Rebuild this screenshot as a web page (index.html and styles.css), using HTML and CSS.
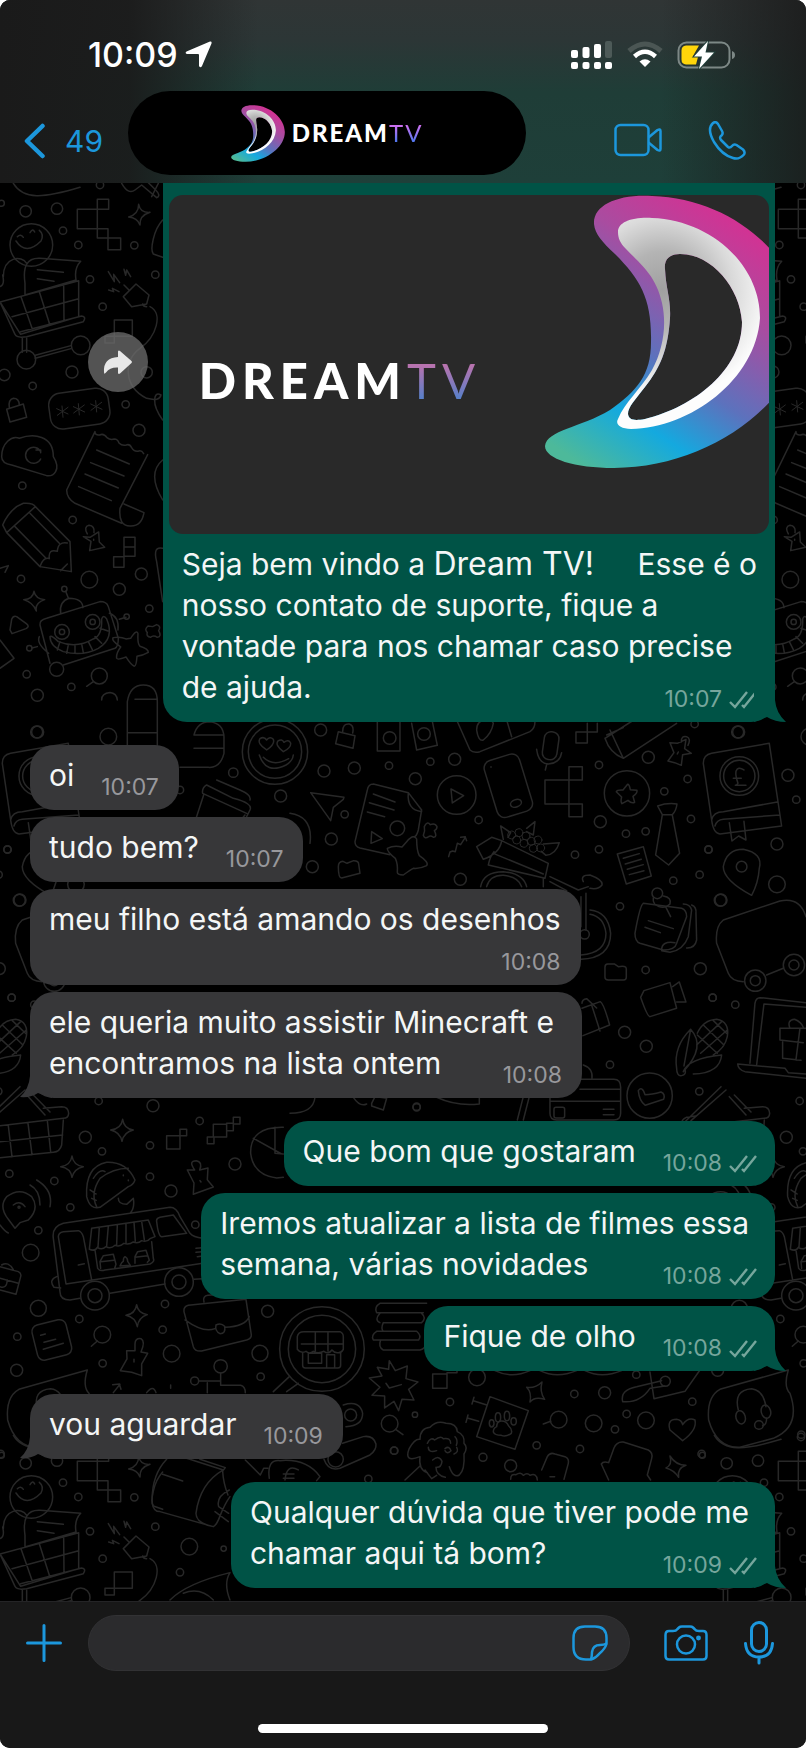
FILE: index.html
```html
<!DOCTYPE html>
<html lang="pt-BR">
<head>
<meta charset="utf-8">
<meta name="viewport" content="width=device-width, initial-scale=1">
<title>Dream TV</title>
<link rel="stylesheet" href="styles.css">
</head>
<body>
<svg class="defs" aria-hidden="true">
  <defs>
    <linearGradient id="rim" gradientUnits="userSpaceOnUse" x1="760" y1="215" x2="590" y2="470">
      <stop offset="0" stop-color="#dc2c90"/>
      <stop offset=".3" stop-color="#a94ca0"/>
      <stop offset=".58" stop-color="#5c72bd"/>
      <stop offset=".78" stop-color="#14a9df"/>
      <stop offset="1" stop-color="#4db99a"/>
    </linearGradient>
    <radialGradient id="silver" gradientUnits="userSpaceOnUse" cx="662" cy="290" r="110">
      <stop offset="0" stop-color="#a0a0a0"/>
      <stop offset=".35" stop-color="#b4b4b4"/>
      <stop offset=".65" stop-color="#dadada"/>
      <stop offset="1" stop-color="#fdfdfd"/>
    </radialGradient>
    <symbol id="mark" viewBox="545 195 258 274">
      <path fill="url(#rim)" fill-rule="evenodd" d="M594 224C593 205 618 194 652 196C735 198 803 262 803 325C803 400 710 468 614 468C575 468 545 459 545 446C547 430 580 428 610 410C637 391 651 375 651 342C652 300 641 280 615 254C602 242 595 234 594 224ZM680 254C668 254 664 261 665 269C666 290 671 299 670 318C668 350 660 368 645 387C635 400 628 407 628 414C629 420 634 421 645 419C694 407 742 370 742 322C740 288 712 254 680 254Z"/>
      <path fill="url(#silver)" fill-rule="evenodd" d="M618 232C618 222 632 217 652 218C710 220 760 264 760 318C756 380 690 428 631 429C620 429 615 424 618 419C625 402 640 390 652 370C663 350 667 325 662 303C656 275 640 264 626 249C620 243 618 238 618 232ZM680 254C668 254 664 261 665 269C666 290 671 299 670 318C668 350 660 368 645 387C635 400 628 407 628 414C629 420 634 421 645 419C694 407 742 370 742 322C740 288 712 254 680 254Z"/>
    </symbol>
    <symbol id="ticks" viewBox="0 0 28 19">
      <path d="M1 12l5 5L18 2M13 15l2 2L27 2" fill="none" stroke="currentColor" stroke-width="2.400"/>
    </symbol>
    <g id="doodles" fill="none" stroke="#282828" stroke-width="4.500" stroke-linejoin="round" stroke-linecap="round">
      <g transform="translate(0 180) scale(.3333)">
        <path d="M40 10C70 60 130 55 240 22M365 10q20 35 40 20l20-15l45 38q15-5-5-25l-20-20"/>
        <circle cx="300" cy="15" r="11"/><circle cx="77" cy="94" r="17"/><circle cx="171" cy="86" r="17"/><circle cx="189" cy="152" r="11"/><circle cx="4" cy="70" r="9"/><circle cx="235" cy="195" r="11"/><circle cx="403" cy="196" r="11"/><circle cx="466" cy="284" r="11"/><circle cx="270" cy="298" r="11"/><circle cx="308" cy="380" r="11"/><circle cx="216" cy="576" r="18"/><circle cx="98" cy="618" r="11"/><circle cx="13" cy="585" r="17"/><circle cx="440" cy="577" r="17"/><circle cx="377" cy="673" r="11"/><circle cx="417" cy="751" r="18"/><circle cx="67" cy="917" r="11"/><circle cx="218" cy="1020" r="11"/><circle cx="268" cy="1199" r="25"/><circle cx="358" cy="1228" r="18"/><circle cx="424" cy="1182" r="18"/><circle cx="63" cy="1197" r="11"/><circle cx="448" cy="1286" r="11"/><circle cx="80" cy="1483" r="11"/><circle cx="298" cy="1488" r="24"/><circle cx="214" cy="1521" r="11"/><circle cx="112" cy="1546" r="18"/><circle cx="170" cy="1468" r="21"/>
        <path d="M232 88h60v58h-60zM292 58h34v30h-34zM292 146h32v28h-32zM324 174h38v35h-38z"/>
        <path d="M416 73q5 26 34 24q-32 10-30 38q-8-22-34-24q30-8 30-38z"/>
        <circle cx="94" cy="195" r="64"/><path d="M48 183q30 45 75 0q10-20-5-32M52 170q10-10 18 2M90 158q8-15 14-2"/>
        <path d="M75 310C68 260 80 233 120 235L242 244Q222 265 228 300L75 345ZM112 269l78 8M112 296l50 8M10 290C10 230 65 225 80 250M0 320q15-5 8-35M0 366L236 302L236 410L62 463ZM0 366L45 463Q50 475 80 470L250 425Q260 410 245 408L62 455M63 350L98 450M118 335L150 436M191 315L192 420M36 410L236 356M67 475v42M80 475v42M106 526L213 497M106 535L213 506"/>
        <circle cx="79" cy="539" r="28"/><circle cx="242" cy="496" r="28"/>
        <path d="M325 275l18 30l-2-22l18 25M372 268l5 18l3-16l12 20M326 330l15 5l-4-10l20 10M370 350L408 312L447 345L440 372L395 380ZM372 315l15 15M440 380q-10 0-12-8M450 380C490 400 470 470 420 505C370 540 370 620 440 655Q480 665 483 645Q465 635 464 660T488 720"/>
        <path d="M343 420h54v49h-54zM315 469h28v20h-28z"/>
        <path d="M20 688l50-16l10 40l-50 14zM28 684q-4-25 12-29q17 0 18 20"/>
        <rect x="148" y="632" width="180" height="108" rx="36" transform="rotate(-8 238 686)"/>
        <path d="M170 686l34 16M204 682l-32 24M186 678l3 34M220 680l34 16M253 675l-32 24M235 671l3 34M272 672l34 16M305 667l-32 24M287 662l3 34" stroke-width="3"/>
        <path d="M5 830C5 790 35 765 58 775C100 760 160 765 160 830C185 870 160 890 140 887L35 855Q5 850 5 830ZM122 815a24 24 0 1 0 0 22M108 810h14v8"/>
        <path d="M285 755L200 930Q200 955 225 970L365 1030M443 824L360 985Q355 1038 390 1038Q425 1040 432 998L372 972M285 755q0 12 14 10q12-6 22 8q10 8 22 4q10 0 14 12q10 10 22 6q10-4 16 8q8 14 22 10q8-2 14 8M290 810l98 42M272 848l100 40M255 882l100 42M236 920l98 42"/>
        <path d="M8 1035Q30 985 70 970Q100 968 106 980L210 1085L214 1175L120 1160L20 1058ZM20 1058L106 980M45 1040L138 1135M90 1000L178 1090M120 1160q10-30 28-24q-4-30 24-22q2-30 30-25M182 1172l20-20M0 1165l25-8l-10 20"/>
        <path d="M250 1070l20 2l26-16l2 30l16 16l-45 10l4-28zM262 1062q-12-22 5-26q18 2 15 22M281 1078v3M372 1072h33v57h-33zM372 1101h33M341 1130h31v32h-31zM488 1105q-30-8-18 40l18 120"/>
        <path d="M102 1234q4 22 32 25q-30 10-25 34q-10-26-38-34q28-2 31-25zM30 1350l5-32q5-12 15-8l30 22q10 8-2 14l-42 15zM0 1380l42 55L0 1465"/>
        <path d="M120 1335Q118 1320 140 1315L300 1265Q320 1265 325 1280L355 1375Q355 1400 345 1405L190 1455M150 1450L120 1335M182 1300q-5-35 25-45q40 0 42 28M205 1254l-8-20M328 1300q30 10 26 50M358 1318l20-6M118 1370q-10 20 28 50M112 1400l-16 4M150 1370q0 30 40 45q60 15 105-10q50-30 25-88q-10-15-15 0q2 50-25 60q-50 30-105 8q-20-20-25-15zM180 1385l-8 25M205 1395l-5 25M225 1395v25M245 1392l5 26M265 1385l12 24M285 1370l20 20M300 1345l24 8"/>
        <circle cx="186" cy="1356" r="22"/><circle cx="186" cy="1356" r="8"/><circle cx="278" cy="1326" r="22"/><circle cx="278" cy="1326" r="8"/><circle cx="193" cy="1227" r="8"/><circle cx="380" cy="1310" r="8"/><circle cx="88" cy="1405" r="8"/>
        <path d="M392 1375q18-28 22-14q-2 30 6 38q25 8 25 18q-18 10-34 12q-2 30-8 30q-10-4-25-28q-25 10-28 4q-2-15 12-34q-30-20-22-28q22-4 38 4zM458 1340l12-6q14 4 6 18q10 18-4 20q-12-8-20 0q-14-2-10-14q-10-10 2-20zM280 1505l-20 14M305 1560q0-20 25-22q20 2 22 22M475 10l-20 40"/>
        <path d="M488 120C460 150 450 210 460 222L488 232M488 840Q440 880 488 960"/>
      </g>
      <g transform="translate(0 720) scale(.3333)">
        <path d="M382 78V-55Q390 -105 430 -105Q472 -105 472 -55V78M405 -62h64M384 38h88M582 45Q592 5 630 5Q670 10 672 50V100Q660 145 625 142H540M582 45h90M582 85h90M620 195L700 235Q760 250 750 270L740 290M620 195Q605 205 608 220L740 280M650 180l70 30Q755 225 750 240M612 222L580 320M735 285L715 310"/>
        <circle cx="825" cy="95" r="98"/><circle cx="825" cy="95" r="80"/><path d="M800 90q-30-20-20-34q12-8 20 4q10-12 20-2q6 14-20 32zM850 95q-26-20-16-32q12-8 18 4q14-10 20 2q2 14-22 26zM778 105q20 60 80 30q20-12 22-30M790 112q30 30 76 4"/>
        <circle cx="110" cy="36" r="18"/><circle cx="325" cy="50" r="25"/><circle cx="540" cy="210" r="11"/><circle cx="700" cy="158" r="14"/><circle cx="842" cy="228" r="18"/><circle cx="22" cy="388" r="11"/><circle cx="60" cy="540" r="18"/><circle cx="35" cy="833" r="11"/>
      </g>
      <g transform="translate(290 720) scale(.3333)">
        <circle cx="92" cy="30" r="18"/><circle cx="102" cy="153" r="18"/><circle cx="193" cy="144" r="18"/><circle cx="297" cy="137" r="11"/><circle cx="421" cy="125" r="11"/><circle cx="494" cy="118" r="18"/><circle cx="376" cy="176" r="18"/><circle cx="164" cy="283" r="11"/><circle cx="124" cy="357" r="18"/><circle cx="67" cy="440" r="18"/><circle cx="566" cy="300" r="11"/><circle cx="511" cy="478" r="18"/><circle cx="927" cy="135" r="11"/><circle cx="1075" cy="112" r="18"/><circle cx="1193" cy="177" r="11"/><circle cx="1123" cy="214" r="11"/><circle cx="1203" cy="297" r="11"/><circle cx="931" cy="305" r="18"/><circle cx="1008" cy="341" r="11"/><circle cx="1067" cy="334" r="11"/><circle cx="927" cy="388" r="11"/><circle cx="855" cy="404" r="11"/><circle cx="1256" cy="389" r="11"/><circle cx="1229" cy="464" r="11"/><circle cx="1150" cy="482" r="11"/><circle cx="990" cy="559" r="11"/><circle cx="1291" cy="541" r="18"/><circle cx="1346" cy="36" r="18"/><circle cx="1494" cy="166" r="18"/><circle cx="1519" cy="239" r="11"/><circle cx="1461" cy="372" r="18"/><circle cx="1461" cy="493" r="25"/><circle cx="1067" cy="750" r="11"/><circle cx="1231" cy="746" r="18"/><circle cx="1268" cy="833" r="11"/><circle cx="1336" cy="854" r="11"/><circle cx="1004" cy="937" r="18"/><circle cx="1069" cy="979" r="18"/><circle cx="960" cy="1034" r="11"/><circle cx="1228" cy="1114" r="11"/><circle cx="380" cy="1162" r="11"/><circle cx="1214" cy="12" r="11"/>
        <path d="M145 35l50 12l-6 38l-52-14zM158 35q0-25 20-23q15 5 10 27M262 0v93h68V0M365 10l15 80l62-14l-15-72M500 0L540 90Q550 100 570 95L720 35Q735 25 735 5M560 30q0-30 30-30q18 0 20 10q-5 30-30 50q-15 5-20-30M650 0l15 50M0 280Q70 290 60 370"/>
        <circle cx="299" cy="54" r="19"/><circle cx="402" cy="42" r="19"/>
        <path d="M62 218L162 232L160 238L130 262L122 302Z"/>
        <path d="M250 192Q235 192 232 210L195 365Q195 380 210 384L300 404M250 192L355 218L395 270L385 330Q380 350 372 350M355 218Q350 270 395 275M250 222l65 24M238 248l74 22M232 276l52 14M245 335l-2 35l34-14z"/><circle cx="322" cy="325" r="22"/>
        <path d="M350 365q22-25 30-8q0 35 8 50q30 20 22 30q-20 10-40 8q-10 5-30 20q-18 0-18-8q2-25-6-42q-25-20-24-30q20-10 44-4zM403 320q8-18 18-6q14-6 20 6q0 8-8 12q10 18-2 20q-10-6-15-2q-12 8-16-4q6-12 3-26z"/>
        <circle cx="500" cy="225" r="58"/><path d="M483 207l38 20l-34 22z"/>
        <path d="M145 440q0-15 14-16l12 6l20-8q15 0 15 10l4 28l-55 14q-10 0-10-34zM476 410l4-14l8-3l8 2l6-25l10 4l14-22l4 10M512 352l14-2"/>
        <rect x="600" y="108" width="110" height="178" rx="24" transform="rotate(-17 656 197)"/><ellipse cx="678" cy="250" rx="17" ry="11" transform="rotate(-20 678 250)"/><path d="M603 140v2"/>
        <rect x="760" y="35" width="44" height="84" rx="20" transform="rotate(8 782 77)"/><path d="M740 88Q745 130 775 132Q810 130 815 98M770 134l-4 16M858 36h34v33h-34zM892 36V10M892 36h30V10"/>
        <path d="M765 180h72v72h-72zM837 140h40v40h-40zM837 252h40v38h-40z"/>
        <path d="M945 55L1055 -15M945 55Q960 100 1000 115L1160 10M960 30L1000 115M950 45l50-22"/>
        <path d="M1140 68l22 2l26-12l-4 28l20 14l-26 4l-4 32l-20-8l-20-5l18-25zM1174 66q0-20 16-16q14 6 4 26M1165 96l-3 6"/>
        <circle cx="1011" cy="220" r="68"/><path d="M1013 193q5 0 8 16l20 2q2 8-12 18l5 18q-8 5-20-6l-18 10q-5-5-1-20l-16-16q2-6 20-5z"/>
        <path d="M1103 258q28-10 58-6q-2 20-14 32h-30zM1117 285L1097 405L1136 435L1169 400L1147 285M982 402l78-22l24 88l-75 24zM1000 415l48-14M1006 432l48-14M1012 448l48-14M1018 464l44-12"/>
        <path d="M1240 130Q1240 105 1265 100L1438 70L1475 318L1290 342Q1270 340 1265 300ZM1265 300Q1270 275 1300 275L1462 246M1275 318Q1280 300 1300 298L1470 285M1318 308l8 55l20-15l22 12l-6-56"/><circle cx="1348" cy="168" r="58"/><circle cx="1348" cy="168" r="47"/><path d="M1362 150q-18-12-24 4q-2 12 6 36q-4 6-8 6h32M1330 175h24"/>
        <path d="M1385 526Q1300 480 1300 440Q1310 388 1360 388Q1420 400 1408 445Q1405 490 1385 526Z"/><circle cx="1355" cy="440" r="16"/>
        <path d="M572 500Q580 455 640 455Q700 460 710 500M590 500Q600 465 640 466Q685 470 695 500M560 380L605 352L635 362Q630 400 580 418ZM635 362L775 430L765 475L595 435Q600 410 612 395M610 400L760 462M760 475V500M780 470L865 510L895 500M780 485L830 512M880 485Q870 465 900 465Q940 480 936 495Q925 510 900 505M888 520V630M873 530V620M632 318l30 20l-8 14M632 318l8 40M735 305l-5 40l-20-10M735 305l-25 20M760 372l48-4q-10 35-40 38l-14-12"/>
        <g stroke-width="3"><circle cx="665" cy="345" r="12"/><circle cx="687" cy="338" r="12"/><circle cx="708" cy="348" r="12"/><circle cx="680" cy="360" r="12"/><circle cx="702" cy="370" r="12"/><circle cx="724" cy="364" r="12"/><circle cx="744" cy="360" r="12"/><circle cx="730" cy="385" r="12"/><circle cx="752" cy="384" r="12"/></g>
        <path d="M873 718Q962 715 962 640Q955 575 900 570M873 705Q948 700 948 640Q942 590 900 583"/><circle cx="884" cy="643" r="14"/>
        <path d="M1060 550Q1050 555 1035 640Q1035 665 1050 670L1120 690Q1155 690 1160 670L1190 590Q1190 570 1175 565L1060 550M1180 552Q1200 552 1205 570L1195 650Q1180 690 1140 697L1115 692M1205 555Q1220 560 1218 580L1220 660Q1215 685 1190 684M1075 602l75 24M1065 622l46 16M1115 690q0-28 40-22"/><circle cx="1102" cy="520" r="16"/><path d="M1090 534q-2 10 4 18q26 20 46 0q6-20-20-24M1128 562l14 28"/>
        <path d="M1300 600L1470 543Q1530 530 1548 590M1300 600Q1275 620 1280 670L1315 760Q1325 785 1360 785M1430 765L1480 745"/><circle cx="1396" cy="782" r="32"/><circle cx="1396" cy="782" r="15"/><circle cx="1512" cy="735" r="32"/><circle cx="1512" cy="735" r="15"/>
        <path d="M945 742q0-10 8-10h20l12 8q24-4 24 6v26q0 8-8 8h-46q-10 0-10-8z"/>
        <path d="M1062 812L1140 788L1160 865L1080 890Q1072 890 1052 832ZM1148 800l20-14l20 60l-28 0"/>
        <path d="M876 850q0-12 14-14l30 28M876 865l55-20q10 5 28 70l-80 32M905 855l25 78"/>
        <path d="M1160 1045Q1150 980 1202 928Q1250 980 1180 1055M1180 1055Q1195 1015 1295 1005Q1290 1060 1210 1062M1160 1045q0 24 15 22q15-2 10-20M1202 928l-20 110M1222 940Q1240 900 1280 898Q1320 905 1312 950Q1305 985 1270 1005M1222 945l60 55M1240 915l62 60M1270 902l42 40M1295 905l-75 70M1312 930l-80 70"/>
        <path d="M1548 848L1410 833Q1398 833 1395 850L1380 1030M1548 862L1422 852L1400 1035M1548 1075L1365 1055Q1345 1050 1343 1032L1485 1045L1495 1058L1548 1062M1470 925h78M1470 925v35l70 8M1478 965v50l55 6M1530 925l-12 95M1500 925q-10-25 14-27q20 8 26 24"/>
        <circle cx="1079" cy="1127" r="68"/><path d="M1045 1112q12-15 20 12q20 0 48-8q14 6 8 22l-55 18q-18-12-21-44z"/>
        <path d="M860 1078h112q20 0 20 24v78q0 20-20 20H800q-20 0-20-20V1130M870 1108h122M780 1144h212M940 1168h32M940 1184h32"/><rect x="792" y="1162" width="32" height="32" rx="6"/>
        <path d="M880 1035q30 10 26 42M700 1130L682 1200M718 1130L700 1200"/>
        <path d="M0 1180Q70 1180 75 1132M190 1132q20 30 40 20M245 1150l10-20l35 5l-10 35l-35-12zM440 1132Q500 1160 568 1152V1132"/>
      </g>
      <g transform="translate(0 1090) scale(.3333)">
        <circle cx="459" cy="47" r="18"/><circle cx="296" cy="33" r="11"/><circle cx="256" cy="142" r="18"/><circle cx="306" cy="184" r="11"/><circle cx="450" cy="166" r="11"/><circle cx="599" cy="93" r="11"/><circle cx="163" cy="273" r="11"/><circle cx="28" cy="251" r="11"/><circle cx="450" cy="260" r="11"/><circle cx="513" cy="303" r="18"/><circle cx="705" cy="222" r="18"/><circle cx="211" cy="352" r="11"/><circle cx="115" cy="421" r="11"/><circle cx="586" cy="404" r="11"/><circle cx="92" cy="488" r="25"/><circle cx="115" cy="655" r="24"/><circle cx="238" cy="687" r="11"/><circle cx="495" cy="642" r="11"/><circle cx="488" cy="719" r="11"/><circle cx="52" cy="740" r="11"/><circle cx="50" cy="841" r="18"/><circle cx="308" cy="820" r="11"/><circle cx="515" cy="791" r="25"/><circle cx="803" cy="664" r="18"/><circle cx="780" cy="790" r="24"/><circle cx="782" cy="860" r="11"/><circle cx="1245" cy="974" r="8"/><circle cx="1182" cy="1082" r="11"/><circle cx="1350" cy="936" r="11"/><circle cx="568" cy="1370" r="25"/><circle cx="540" cy="1447" r="11"/><circle cx="671" cy="1376" r="8"/><circle cx="1250" cy="50" r="11"/>
        <path d="M-48 95L60 -10M-30 92L75 0M85 20L135 75M100 15L150 66M130 55L185 50Q205 50 206 70Q205 85 190 85L-40 112M190 90L185 165Q180 185 160 187L-10 204L-36 112M25 108L36 200M84 100L96 194M142 92L152 186M-28 158L188 135M-48 108q-20-14 4-26l28-4"/>
        <path d="M368 88q4 28 32 32q-28 6-34 34q-6-28-34-34q32-4 36-32zM216 198q4 28 34 32q-28 6-34 32q-4-28-34-32q30-4 34-32zM410 644q4 26 32 30q-26 8-30 36q-6-28-34-34q28-4 32-32z"/>
        <path d="M500 137h40v40h-40zM540 118h20v19h-20zM640 103h40v38h-40zM622 141h20v20h-20zM680 100h20v22h-20zM700 82h20v20h-20zM850 112Q750 110 752 190Q760 255 830 264L850 262M760 145L845 192M825 112V190L850 192"/>
        <path d="M260 320Q255 230 320 217Q380 215 405 270Q400 285 385 290L300 352Q270 360 260 320ZM290 350Q270 310 300 265Q340 235 385 235M280 265q20-30 35-20M370 255v2M385 270v2M270 300l18 12M275 325l14 6"/>
        <path d="M562 240l22 0q-20-28 5-28q20 4 10 28l25-6l-2 35l18 22l-60 22l2-34zM600 272l3 4"/>
        <path d="M45 415L25 388Q-5 350 20 320Q60 290 95 320Q120 355 85 390L60 398ZM40 345q20-15 35 5M90 285q30 15 30 60M110 270q50 30 40 80M0 405q15 20 25 24"/><circle cx="57" cy="352" r="3"/>
        <path d="M180 605L160 445Q155 410 190 400L510 352Q530 352 540 380L570 430Q580 442 608 445M175 440Q175 428 190 425L235 422Q245 425 250 440L275 570M175 440L198 582L608 520M180 605Q180 630 210 630L240 625M330 610L495 582M582 568L608 566M170 560q-25 10-8 32l20 2M235 525l18-4M470 395Q468 385 480 382L520 375L560 430L485 440Q475 440 470 395ZM355 325q0 18 25 18l20-18q5 30-10 45M588 475l20-2M588 487l20-2M592 500l16-2"/>
        <path d="M275 415L445 390L465 440M275 415L268 478Q285 485 292 472Q305 482 318 470Q332 478 345 466Q360 472 372 460Q386 466 400 456Q414 462 425 452Q440 458 450 446L465 440M298 412l-4 60M325 408l-5 60M352 404l-2 60M378 400l0 60M402 396l4 58M425 394l8 55M285 480l8 55Q300 545 315 540L450 522Q465 515 460 505L455 455M302 535l-2-20l10-18l30-4l8 30l-4 12M302 515l40-4M360 528q5-12 10-14q0-12 5-14q8 4 8 14l8 12zM405 520l0-20l8-15l25-4l10 30l-6 6M405 502l38-5"/>
        <circle cx="285" cy="617" r="43"/><circle cx="285" cy="617" r="21"/><circle cx="537" cy="576" r="43"/><circle cx="537" cy="576" r="21"/>
        <path d="M0 530L55 545Q65 550 62 560L48 613L0 600M5 525q20-12 35 14M0 565l55 15M0 590q20 8 22-20"/>
        <rect x="103" y="696" width="105" height="108" rx="20" transform="rotate(-14 155 750)"/><path d="M122 736l14-4M132 757l35-9M130 778l60-18"/>
        <circle cx="307" cy="734" r="25"/><path d="M292 753l-18 16M380 782l25 0l0-20q0-18 18-16q14 8 0 40l20 4l-18 32l0 35l-30-10l-34-5l20-35zM402 808v8"/>
        <path d="M552 665Q550 650 565 646L738 628M552 665L580 770Q585 785 605 783L740 750Q755 745 754 735L738 628M555 690Q610 730 645 716M675 712Q735 710 748 680M612 636q-5-18 12-20l22-2M648 705q15-8 26 4q4 22-14 22q-16-8-12-26z"/>
        <circle cx="966" cy="777" r="127"/><circle cx="966" cy="777" r="101"/><path d="M868 860L820 905M895 880L860 905M912 725h108q10 4 10 15v38q-6 12-18 10q-10 0-16-8q-10 14-24 4q-18 8-32 0q-12 10-22 0q-16 8-26-6v-38q2-15 20-15zM904 762h124M946 725v58M984 725v58M908 788v38q0 8 8 8h98q8 0 8-8v-38M925 790h40v30h-40zM980 834v-40h24v38"/>
        <circle cx="662" cy="829" r="20"/><circle cx="584" cy="873" r="12"/><path d="M662 850v36M597 873h65M622 908v-30M662 886h60q14 4 14 22M440 908q20-25 28 0M512 885v10M340 908l20-25M338 884l20-2l5 16"/>
        <path d="M1140 640h140M1140 640q-18 10-10 28h140M1150 698h115q16-14 0-28M1140 670q-18 20 0 28M1150 698q-8 18 0 26M1130 724h120q16 14 6 26H1120q-8-14 10-26M1142 750q-8 22 8 30h110q14-4 18-16"/>
        <path d="M1168 812l18 30l36-14l-4 38l36 10l-28 22l16 32l-36-2l-10 34l-14-28l-28 20l0-36l-38-2l24-24l-32-28l38-6l-14-26l34 6zM1158 880l10 14l36-10"/>
        <circle cx="1052" cy="975" r="18"/><path d="M1030 945q50-15 58 25q0 38-50 40M1028 1060L1090 1040Q1120 1035 1128 1062Q1130 1080 1110 1095L1020 1135Q985 1145 972 1108"/><circle cx="1007" cy="1108" r="23"/><circle cx="1169" cy="1001" r="25"/><path d="M1187 1018l22 16"/>
        <path d="M500 1108C460 1150 455 1200 457 1240Q460 1265 480 1265L640 1310C660 1300 655 1270 690 1220M560 1105L670 1140Q600 1180 588 1270Q588 1300 640 1310M488 1153l60 20M600 1108l76 25l-8 10Q670 1180 684 1215M736 1110l45 45l10-20l12 0M808 1165Q800 1108 840 1112Q920 1105 960 1160L950 1172M895 1140q-35-20-40 30M850 1152h32M850 1165h32M688 1200q-40 20-32 50l30 20M645 1265l40 30"/>
        <path d="M510 1530Q560 1480 690 1448Q670 1480 690 1530M550 1510q50-20 90 20"/>
      </g>
      <g transform="translate(340 1360) scale(.3333)">
        <circle cx="411" cy="52" r="25"/><circle cx="703" cy="102" r="11"/><circle cx="794" cy="98" r="18"/><circle cx="889" cy="44" r="11"/><circle cx="1057" cy="125" r="11"/><circle cx="860" cy="162" r="11"/><circle cx="918" cy="181" r="25"/><circle cx="656" cy="179" r="25"/><circle cx="761" cy="190" r="25"/><circle cx="825" cy="208" r="11"/><circle cx="590" cy="256" r="11"/><circle cx="720" cy="267" r="11"/><circle cx="429" cy="292" r="12"/><circle cx="512" cy="317" r="18"/><circle cx="163" cy="272" r="11"/><circle cx="1085" cy="282" r="11"/><circle cx="1384" cy="224" r="11"/><circle cx="976" cy="64" r="15"/><circle cx="85" cy="357" r="11"/>
        <path d="M278 42h43v43h-43zM321 38h30V30M465 32q50 25 105 0M600 32q50 25 110 0M735 32q50 25 110 0M610 192l22-8"/>
        <path d="M606 66q-8 30 8 52q-30-10-44 8q6-28-10-44q26 4 46-16zM990 288q18 28 48 28q-28 10-22 36q-14-22-38-28q20-10 12-36z"/>
        <path d="M450 110L565 152L525 268L410 230ZM402 112l-6 20M400 122l38 12M384 165l-6 22M382 174l34 10M478 184q20-4 28 14q12 10 8 22q-16 12-30 6q-20 0-24-10q0-12 10-16q0-12 8-16z"/><ellipse cx="474" cy="172" rx="8" ry="14"/><ellipse cx="501" cy="168" rx="8" ry="14"/><ellipse cx="455" cy="190" rx="7" ry="11"/><ellipse cx="521" cy="184" rx="8" ry="11"/>
        <path d="M240 290Q190 310 208 265Q225 235 240 238Q240 205 270 202Q290 180 318 190Q350 190 352 215Q375 225 372 250Q385 262 372 282Q375 330 358 345Q340 355 328 320M240 290Q235 330 262 338M262 250q10-20 22-10q18-14 26-4q22-4 22 14M265 262q0 18 25 10M315 266q12-10 18 6q-12 12-18 0M350 262q8 14-8 20M278 300q20-16 28 4q-2 18-15 18M288 322q0 24 28 30M240 318L195 360M255 330l20 26l15-10M345 230q10 10 4 26"/>
        <path d="M605 330L622 290Q630 276 645 282L675 290Q688 296 685 310L672 358M630 350h14M512 358q0-18 16-14q14-10 22 2q12-10 20 0q20-8 22 14"/>
        <path d="M806 360L784 312Q790 302 806 308L822 264Q830 244 850 246L925 270Q940 278 935 296L922 345L932 360"/>
        <path d="M930 36L942 116L1035 94L1080 30M848 125Q840 90 890 80L965 62M848 125Q900 130 930 85L975 78"/>
        <path d="M1028 242L990 210Q980 178 1010 178Q1025 180 1028 194Q1045 170 1065 180Q1072 210 1028 242Z"/>
        <path d="M1345 30Q1330 80 1350 100Q1385 200 1300 235L1200 262Q1130 265 1106 180Q1100 110 1140 88L1345 30M1195 150Q1180 90 1235 86Q1270 90 1278 140"/><ellipse cx="1202" cy="172" rx="14" ry="20" transform="rotate(-15 1202 172)"/><ellipse cx="1278" cy="155" rx="14" ry="20" transform="rotate(-15 1278 155)"/><path d="M1280 175q0 20-12 22"/><circle cx="1257" cy="195" r="13"/>
      </g>
    </g>
  </defs>
</svg>

<div class="app">
  <header class="top">
    <div class="status">
      <div class="status-left">
        <time class="clock">10:09</time>
        <svg width="27" height="27" viewBox="0 0 27 27"><path d="M25 0.5Q27 0 26.500 2.500L17 25Q15.500 27.500 14 25V14Q14 13 13 13H2Q-.5 12 1.500 10.500Z" fill="#fff"/></svg>
      </div>
      <div class="status-right">
        <svg width="42" height="28" viewBox="0 0 42 28" fill="#fff"><rect y="9" width="7" height="8" rx="2"/><rect x="11.500" y="6" width="7" height="11" rx="2"/><rect x="23" y="3" width="7" height="14" rx="2"/><rect x="34" width="7" height="17" rx="2" fill="#4d5a58"/><rect y="21" width="7" height="7" rx="2"/><rect x="11.500" y="21" width="7" height="7" rx="2"/><rect x="23" y="21" width="7" height="7" rx="2"/><rect x="34" y="21" width="7" height="7" rx="2"/></svg>
        <svg width="36" height="27" viewBox="0 0 36 27" fill="none"><path d="M2 10Q18-4 34 10" stroke="#4b5654" stroke-width="5"/><path d="M7.500 15.500Q18 6 28.500 15.500" stroke="#fff" stroke-width="4.500"/><path d="M12.500 20.500Q18 16 23.500 20.500L18 26Z" fill="#fff"/></svg>
        <svg width="59" height="28" viewBox="0 0 59 28"><rect x="1.500" y="1.500" width="51" height="25" rx="8" fill="none" stroke="#7d8886" stroke-width="2"/><path d="M55 10q3 1 3 4t-3 4z" fill="#7d8886"/><path d="M9 4.500H22L16 15L21 16L19 23.500H9Q4.500 23 4.500 18.500V9.500Q4.500 5 9 4.500Z" fill="#ffd50a"/><path d="M31 0L17 15.500H25L22 28L37 11.500H28.500Z" fill="#fff" stroke="#22403b" stroke-width="2" paint-order="stroke"/></svg>
      </div>
    </div>
    <nav class="bar">
      <a class="back" href="#chats" aria-label="Voltar, 49 conversas">
        <svg width="22" height="36" viewBox="0 0 22 36"><path d="M18.500 3L3 18L18.500 33" fill="none" stroke="currentColor" stroke-width="4.500" stroke-linecap="round" stroke-linejoin="round"/></svg>
        <span>49</span>
      </a>
      <div class="pill">
        <svg class="mark-small"><use href="#mark"/></svg>
        <span class="word word-small">DREAM<span class="word-tv tv-small">TV</span></span>
      </div>
      <div class="calls">
        <button type="button" aria-label="Chamada de vídeo"><svg width="48" height="34" viewBox="0 0 48 34" fill="none" stroke="currentColor" stroke-width="2.500" stroke-linejoin="round"><rect x="1.500" y="2" width="33" height="30" rx="5"/><path d="M34.500 14.500L43.500 7Q46.500 5.500 46.500 8V26Q46.500 28.500 43.500 27L34.500 19.500"/></svg></button>
        <button type="button" aria-label="Chamada de voz"><svg width="38" height="39" viewBox="0 0 38 39" fill="none" stroke="currentColor" stroke-width="2.500" stroke-linejoin="round"><path d="M5 2Q8 0 10 3L14 10Q15.500 12.500 13.500 14.500Q11 16 13 19L20 26Q22 27.500 24 25Q26 22.500 28.500 24L35 28.500Q37.500 31 36 33.500Q31 39 25 37Q14 34 6 21Q-1.500 8 5 2Z"/></svg></button>
      </div>
    </nav>
  </header>

  <main class="chat">
    <svg class="wallpaper" aria-hidden="true"><g transform="translate(0 -183)"><use href="#doodles"/><use href="#doodles" x="701"/><use href="#doodles" x="-701"/><use href="#doodles" y="1252"/><use href="#doodles" x="701" y="1252"/></g></svg>

    <div class="group out media-group">
      <button class="share" type="button" aria-label="Encaminhar"><svg width="30" height="25" viewBox="0 0 30 25"><path d="M15 1.500V7Q0 8 1 22Q1 25 3 22.500Q7 17 15 17.500V23Q15.500 24.500 17 23.500L28.500 13Q29.500 12 28.500 11L17 1Q15.500 0 15 1.500Z" fill="#e8e8e8"/></svg></button>
      <article class="bubble media tail">
        <div class="picture">
          <span class="word word-big">DREAM<span class="word-tv">TV</span></span>
          <svg class="mark-big"><use href="#mark"/></svg>
        </div>
        <div class="caption stack">
          <p>Seja bem vindo a <span class="brand">Dream TV!</span> Esse é o<br>nosso contato de suporte, fique a<br>vontade para nos chamar caso precise<br>de ajuda.</p>
          <span class="meta"><time>10:07</time><svg class="ticks"><use href="#ticks"/></svg></span>
        </div>
      </article>
    </div>

    <div class="group in">
      <article class="bubble"><p>oi</p><span class="meta"><time>10:07</time></span></article>
      <article class="bubble"><p>tudo bem?</p><span class="meta"><time>10:07</time></span></article>
      <article class="bubble below"><p>meu filho está amando os desenhos</p><span class="meta"><time>10:08</time></span></article>
      <article class="bubble stack tail"><p>ele queria muito assistir Minecraft e<br>encontramos na lista ontem</p><span class="meta"><time>10:08</time></span></article>
    </div>

    <div class="group out">
      <article class="bubble"><p>Que bom que gostaram</p><span class="meta"><time>10:08</time><svg class="ticks"><use href="#ticks"/></svg></span></article>
      <article class="bubble stack"><p>Iremos atualizar a lista de filmes essa<br>semana, várias novidades</p><span class="meta"><time>10:08</time><svg class="ticks"><use href="#ticks"/></svg></span></article>
      <article class="bubble tail"><p>Fique de olho</p><span class="meta"><time>10:08</time><svg class="ticks"><use href="#ticks"/></svg></span></article>
    </div>

    <div class="group in">
      <article class="bubble tail"><p>vou aguardar</p><span class="meta"><time>10:09</time></span></article>
    </div>

    <div class="group out">
      <article class="bubble stack tail"><p>Qualquer dúvida que tiver pode me<br>chamar aqui tá bom?</p><span class="meta"><time>10:09</time><svg class="ticks"><use href="#ticks"/></svg></span></article>
    </div>
  </main>

  <footer class="bottom">
    <form class="composer">
      <button type="button" aria-label="Anexar"><svg width="36" height="38" viewBox="0 0 36 38"><path d="M18 1.500V36.500M1.500 19H34.500" stroke="currentColor" stroke-width="3" stroke-linecap="round"/></svg></button>
      <div class="field">
        <input type="text" aria-label="Mensagem">
        <button type="button" aria-label="Figurinhas"><svg width="36" height="36" viewBox="0 0 36 36" fill="none" stroke="currentColor" stroke-width="2.500" stroke-linejoin="round"><path d="M19 34.500H14Q1.500 34.500 1.500 22V13Q1.500 1.500 13 1.500H23Q34.500 1.500 34.500 13V19Q33 24 27.500 28.500Q24 33 19 34.500Z"/><path d="M19 34.500Q20 31 20 27Q21 20 28 20Q32 20 34.500 18.500"/></svg></button>
      </div>
      <div class="tools">
        <button type="button" aria-label="Câmera"><svg width="44" height="36" viewBox="0 0 44 36" fill="none" stroke="currentColor" stroke-width="2.500" stroke-linejoin="round"><path d="M1.500 10Q1.500 6 5 6H9Q12 6 13.500 4L15 2.500Q16 1.500 18 1.500H26Q28 1.500 29 2.500L30.500 4Q32 6 35 6H39Q42.500 6 42.500 10V31Q42.500 34.500 39 34.500H5Q1.500 34.500 1.500 31Z"/><circle cx="22" cy="19.500" r="9"/><circle cx="34.500" cy="13" r="1.200" fill="currentColor"/></svg></button>
        <button type="button" aria-label="Gravar áudio"><svg width="30" height="44" viewBox="0 0 30 44" fill="none" stroke="currentColor" stroke-width="3" stroke-linecap="round"><rect x="7.500" y="1.500" width="15" height="29" rx="7.500"/><path d="M1.500 22.500Q2.500 36 15 36Q27.500 36 28.500 22.500M15 36V42"/></svg></button>
      </div>
    </form>
    <div class="home"></div>
  </footer>
</div>
</body>
</html>
```
FILE: styles.css
```css
* { box-sizing: border-box; }

body {
  margin: 0;
  background: #fff;
  font-family: Inter, Roboto, sans-serif;
  color: #f4f6f6;
}

p { margin: 0; }

button {
  display: flex;
  align-items: center;
  justify-content: center;
  padding: 0;
  border: 0;
  background: none;
  color: #1c97dc;
}

.defs { position: absolute; width: 0; height: 0; }

.app {
  display: flex;
  flex-direction: column;
  min-height: 100vh;
  overflow: hidden;
  border-radius: 10px;
  background: #000;
}

/* header */
.top {
  display: flex;
  flex-direction: column;
  background:
    linear-gradient(to right, #1a1a1a 0, #1a1a1ae6 16%, #1a1a1a00 32%, #1a1a1a00 82%, #1a1a1ad0 100%),
    linear-gradient(to bottom, #303535 0, #2c3636 22%, #1f3d37 50%, #1e3f39 100%);
}

.status {
  display: flex;
  justify-content: space-between;
  align-items: center;
  height: 91px;
  padding: 18px 70px 0 88px;
}

.status-left { display: flex; align-items: center; gap: 7px; }
.status-right { display: flex; align-items: center; gap: 14px; }
.clock { font-size: 34px; font-weight: 500; line-height: 40px; color: #fff; }

.bar {
  display: grid;
  grid-template-columns: 104px minmax(0, 398px) 1fr;
  height: 92px;
  padding: 0 60px 8px 24px;
}

.back {
  display: flex;
  align-items: center;
  gap: 19px;
  padding-top: 16px;
  color: #1c97dc;
  font-size: 30px;
  line-height: 40px;
  text-decoration: none;
}

.pill {
  display: flex;
  align-items: center;
  justify-content: center;
  gap: 7px;
  border-radius: 42px;
  background: #000;
}

.mark-small { width: 54px; height: 57px; }

.word {
  font-family: Lato, sans-serif;
  font-weight: 900;
  color: #fff;
  white-space: nowrap;
}

.word-small { font-size: 24px; line-height: 28px; letter-spacing: 2px; }
.word-big { font-size: 49px; line-height: 60px; letter-spacing: 6px; }

.word-tv {
  font-weight: 400;
  background: linear-gradient(#b873ae 25%, #5b7fc8 80%);
  background-clip: text;
  color: transparent;
}

.tv-small { background-image: linear-gradient(#d070f0 25%, #5478f0 80%); }

.calls {
  display: flex;
  align-items: center;
  justify-content: flex-end;
  gap: 46px;
  padding-top: 14px;
}

/* conversation */
.chat {
  position: relative;
  flex: 1;
  display: flex;
  flex-direction: column;
  gap: 23px;
  padding: 0 31px 13px 30px;
  background: #000;
}

.wallpaper {
  position: absolute;
  inset: 0;
  width: 100%;
  height: 100%;
}

.group {
  position: relative;
  display: flex;
  flex-direction: column;
  align-items: flex-start;
  gap: 7px;
}

.out { align-items: flex-end; }
.in { --fill: #373739; --note: #98989c; }
.out { --fill: #005346; --note: #76a69c; }

.bubble {
  position: relative;
  display: flex;
  align-items: flex-end;
  gap: 27px;
  padding: 10px 20px 14px 19px;
  border-radius: 24px;
  background: var(--fill);
  font-size: 30px;
  line-height: 41px;
}

.out .bubble { padding-right: 18px; }
.bubble p { white-space: nowrap; }

.bubble.below { flex-direction: column; gap: 8px; }

.bubble.stack, .caption {
  display: grid;
}

.stack > * { grid-area: 1 / 1; }
.stack > .meta { place-self: end; }
.bubble.stack p { padding-right: 8px; }

.meta {
  display: flex;
  align-items: center;
  gap: 7px;
  height: 28px;
  margin-bottom: -5px;
  color: var(--note);
  font-size: 23px;
  line-height: 28px;
}

.ticks { width: 28px; height: 19px; }

/* small pointer at the foot of the last bubble in a run */
.tail::after {
  content: "";
  position: absolute;
  bottom: 0;
  width: 32px;
  height: 32px;
  background: var(--fill);
}

.in .tail::after {
  left: -10px;
  clip-path: path("M10 0V10Q9 23 0 31Q11 32 18 27L32 32V0Z");
}

.out .tail::after {
  right: -11px;
  clip-path: path("M21 0V10Q22 23 32 32Q21 32 13 27L0 32V0Z");
}

.tail > * { z-index: 1; }

.media-group {
  flex-direction: row;
  justify-content: flex-end;
  align-items: flex-start;
  gap: 15px;
}

.share {
  width: 60px;
  height: 60px;
  margin-top: 149px;
  border-radius: 50%;
  background: #6e6e6ec0;
}

.out .bubble.media {
  display: block;
  flex: 0 1 612px;
  padding: 12px 6px 14px;
  border-radius: 0 0 24px 24px;
}

.picture {
  display: flex;
  justify-content: space-between;
  align-items: flex-start;
  height: 339px;
  overflow: hidden;
  border-radius: 14px;
  background: #292929;
}

.word-big { margin: 155px 0 0 30px; }
.mark-big { flex: none; width: 258px; height: 274px; margin-right: -34px; }

.caption { padding: 9px 12px 0 13px; }
.brand { font-size: 32px; margin-right: 35px; }

/* composer */
.bottom {
  display: flex;
  flex-direction: column;
  align-items: center;
  height: 147px;
  padding-top: 13px;
  border-top: 1px solid #242426;
  background: #181818;
}

.composer {
  display: flex;
  align-items: center;
  align-self: stretch;
  gap: 26px;
  padding: 0 32px 0 26px;
}

.field {
  flex: 1;
  min-width: 0;
  display: flex;
  align-items: center;
  height: 56px;
  padding: 0 21px 0 24px;
  border: 1px solid #323234;
  border-radius: 28px;
  background: #2b2b2d;
}

.field input {
  flex: 1;
  width: 0;
  min-width: 0;
  border: 0;
  outline: 0;
  background: transparent;
  color: #f4f6f6;
  font: 30px Inter, Roboto, sans-serif;
}

.tools {
  display: flex;
  flex: none;
  align-items: center;
  gap: 36px;
  padding-left: 8px;
}

.home {
  width: 36%;
  height: 9px;
  margin-top: 53px;
  border-radius: 5px;
  background: #fff;
}
```
